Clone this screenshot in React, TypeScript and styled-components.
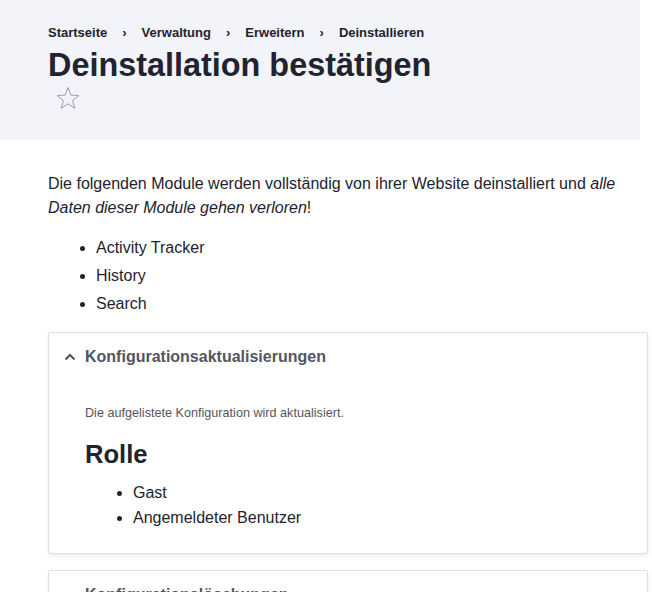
import React from 'react';
import styled, { createGlobalStyle } from 'styled-components';

const GlobalStyle = createGlobalStyle`
  body {
    margin: 0;
    font-family: "Liberation Sans", Arial, sans-serif;
    color: #222330;
    background: #fff;
  }
`;

const Header = styled.header`
  width: 640px;
  box-sizing: border-box;
  padding: 23px 48px 30px;
  background: #f3f4f9;
`;

const Breadcrumb = styled.ol`
  display: flex;
  margin: 0;
  padding: 0;
  list-style: none;
  font-size: 13px;
  line-height: 20px;
  font-weight: bold;
`;

const Crumb = styled.li`
  & + &::before {
    content: '›';
    margin: 0 15px 0 15px;
  }
`;

const Title = styled.h1`
  margin: 2px 0 0;
  font-size: 32.4px;
  line-height: 40px;
  font-weight: bold;
`;

const StarButton = styled.span`
  display: block;
  margin: 1px 0 0 8px;
  width: 24px;
  height: 24px;
`;

const Main = styled.main`
  padding: 32px 48px 0;
  font-size: 16px;
  line-height: 24px;
`;

const Lead = styled.p`
  margin: 0 0 16px;
  width: 580px;
`;

const Bullets = styled.ul<{ $gap: number }>`
  margin: 0;
  padding-left: 48px;

  li {
    margin-bottom: ${({ $gap }) => $gap}px;
  }
`;

const Details = styled.section`
  width: 600px;
  box-sizing: border-box;
  margin-top: 16px;
  border: 1px solid #dedfe4;
  border-radius: 2px;
  box-shadow: 0 2px 4px rgba(0, 0, 0, 0.08);
  background: #fff;

  & + & {
    margin-top: 16px;
  }
`;

const Summary = styled.div`
  display: flex;
  align-items: center;
  gap: 9px;
  padding: 12px 15px;
  color: #545560;
  font-weight: bold;
  line-height: 24px;
`;

const DetailsBody = styled.div`
  padding: 23px 36px 22px;
`;

const Description = styled.div`
  font-size: 12.64px;
  line-height: 18px;
  color: #545560;
`;

const Heading = styled.h2`
  margin: 16px 0 11px;
  font-size: 25.6px;
  line-height: 32px;
  font-weight: bold;
`;

const Chevron = ({ open }: { open: boolean }) => (
  <svg width="12" height="12" viewBox="0 0 12 12" aria-hidden="true">
    <path
      d={open ? 'M1.5 8.5L6 4l4.5 4.5' : 'M1.5 4L6 8.5 10.5 4'}
      fill="none"
      stroke="#545560"
      strokeWidth="2"
    />
  </svg>
);

const Star = () => (
  <svg width="24" height="24" viewBox="0 0 24 24" aria-hidden="true">
    <path
      d="M12 1.5l2.9 7.6 8 .4-6.3 5 2.2 7.8L12 17.8l-6.8 4.5 2.2-7.8-6.3-5 8-.4z"
      fill="none"
      stroke="#9d9ea6"
      strokeWidth="1"
      strokeLinejoin="round"
    />
  </svg>
);

const crumbs = ['Startseite', 'Verwaltung', 'Erweitern', 'Deinstallieren'];
const modules = ['Activity Tracker', 'History', 'Search'];
const roles = ['Gast', 'Angemeldeter Benutzer'];

export default function App() {
  return (
    <>
      <GlobalStyle />
      <Header>
        <Breadcrumb>
          {crumbs.map((c) => (
            <Crumb key={c}>{c}</Crumb>
          ))}
        </Breadcrumb>
        <Title>Deinstallation bestätigen</Title>
        <StarButton>
          <Star />
        </StarButton>
      </Header>
      <Main>
        <Lead>
          Die folgenden Module werden vollständig von ihrer Website deinstalliert und{' '}
          <em>alle Daten dieser Module gehen verloren</em>!
        </Lead>
        <Bullets $gap={4}>
          {modules.map((m) => (
            <li key={m}>{m}</li>
          ))}
        </Bullets>
        <Details>
          <Summary>
            <Chevron open />
            Konfigurationsaktualisierungen
          </Summary>
          <DetailsBody>
            <Description>Die aufgelistete Konfiguration wird aktualisiert.</Description>
            <Heading>Rolle</Heading>
            <Bullets $gap={1}>
              {roles.map((r) => (
                <li key={r}>{r}</li>
              ))}
            </Bullets>
          </DetailsBody>
        </Details>
        <Details>
          <Summary>
            <Chevron open={false} />
            Konfigurationslöschungen
          </Summary>
        </Details>
      </Main>
    </>
  );
}
